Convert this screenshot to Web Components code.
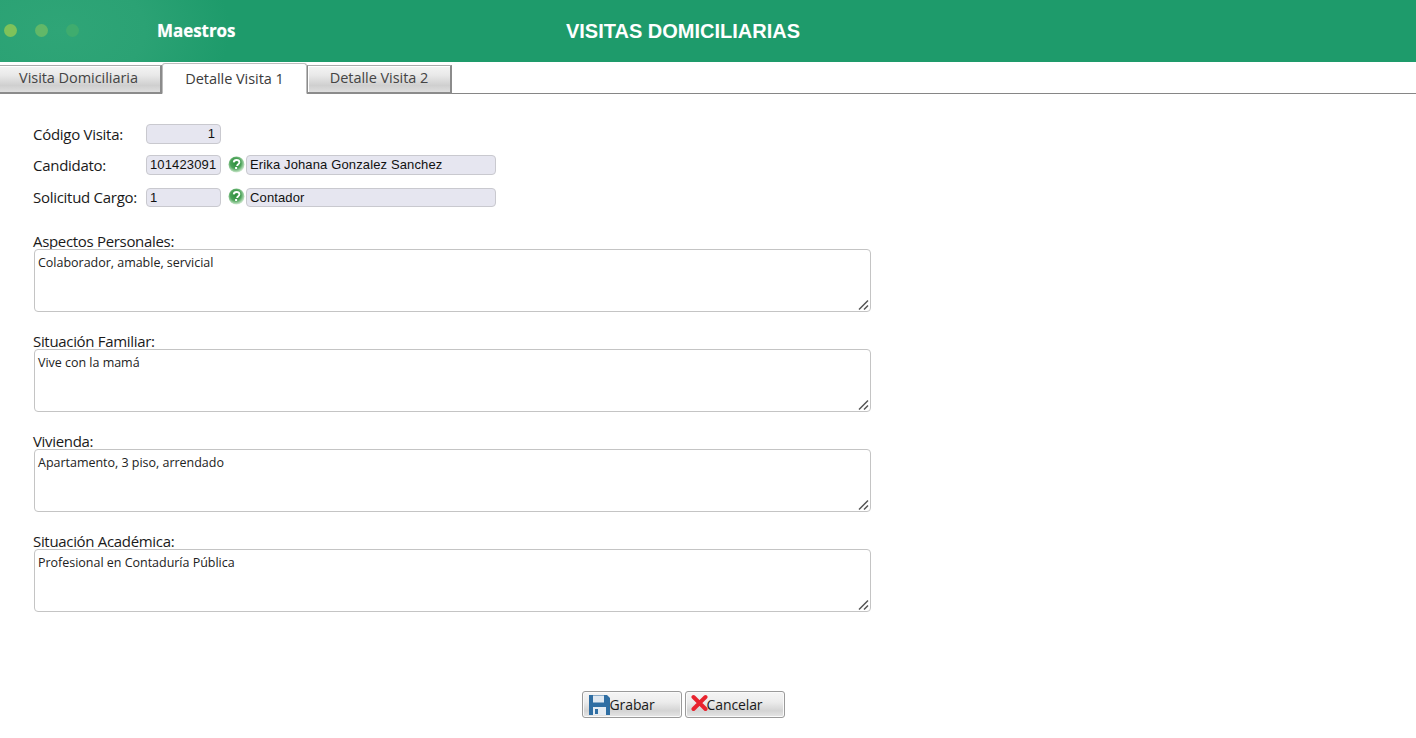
<!DOCTYPE html>
<html lang="es"><head><meta charset="utf-8"><title>Visitas Domiciliarias</title>
<style>
html,body{margin:0;padding:0;background:#fff;height:100%;overflow:hidden}
body{font-family:"Open Sans","Noto Sans",sans-serif;color:#1a1a1a}
</style></head><body>
<template id="t-header"><style>
:host{display:grid;grid-template-columns:1fr auto 1fr;align-items:center;height:62px;padding-bottom:2px;box-sizing:border-box;color:#fff;
background:radial-gradient(ellipse 170px 110px at 60px 30px,#2fa577 0%,#2ba274 50%,rgba(31,155,106,0) 100%),#1e9b6b}
.l{display:flex;align-items:center;position:relative;height:100%}
.dots{display:flex;gap:18px;margin-left:4px;width:153px}
.dots i{width:13px;height:13px;border-radius:50%;display:block;filter:blur(.6px)}
.m{font:700 17px "Open Sans",sans-serif;letter-spacing:-.05px;text-shadow:0 0 1px rgba(255,255,255,.5)}
.t{font:700 20px "Liberation Sans",sans-serif;transform:translateX(-25px);margin-top:2px}
</style><div class="l"><div class="dots"><i style="background:#7fc25a"></i><i style="background:#62b868"></i><i style="background:#3fac6e"></i></div><span class="m"><slot name="menu"></slot></span></div><div class="t"><slot name="title"></slot></div><div></div></template>

<template id="t-tabs"><style>
:host{display:flex;align-items:flex-end;height:32px;box-sizing:border-box;border-bottom:1px solid #868686;padding-left:0}
</style><slot></slot></template>

<template id="t-tab"><style>
:host{display:block;box-sizing:border-box;height:29px;margin-bottom:-1px;border:1px solid #8b8b8b;border-width:1px 2px 2px 1px;border-top-color:#aaa;
font:14.5px/24px "Open Sans",sans-serif;letter-spacing:-.05px;color:#444;text-align:center;
background:linear-gradient(#f4f4f4 0%,#e9e9e9 35%,#cfcfcf 75%,#dedede 100%);box-shadow:inset 1px 1px 0 #fff}
:host([active]){height:31px;background:#fff;border:1px solid #bdbdbd;border-bottom-color:#fff;border-radius:3px 3px 0 0;box-shadow:none;line-height:29px;color:#3b3b3b}
</style><slot></slot></template>

<template id="t-field"><style>
:host{display:block;box-sizing:border-box;height:20px;background:#e6e6f0;border:1px solid #c9c9cf;border-radius:4px;
font:13px/18px "Liberation Sans",sans-serif;color:#111;padding:0 3px;white-space:nowrap;overflow:hidden;letter-spacing:.13px}
:host([right]){text-align:right;padding-right:5px}
</style><slot></slot></template>

<template id="t-help"><style>
:host{display:block;width:17px;height:17px;margin:-2px 0 0 -1px}
svg{display:block}
</style><svg width="17" height="17" viewBox="0 0 17 17"><defs><radialGradient id="g" cx=".45" cy=".42" r=".6"><stop offset="0" stop-color="#2f8f3e"/><stop offset=".55" stop-color="#4aa257"/><stop offset=".85" stop-color="#a9d6ad"/><stop offset="1" stop-color="#dceedd"/></radialGradient></defs><circle cx="8.500" cy="8.500" r="8" fill="url(#g)"/><path d="M5.700 6.400C5.900 4.700 7 4 8.500 4c1.700 0 2.900.9 2.900 2.300 0 1.100-.7 1.700-1.400 2.200-.7.500-.9.8-.9 1.600" fill="none" stroke="#fff" stroke-width="1.800"/><rect x="7.100" y="11" width="2" height="2" fill="#fff"/></svg></template>

<template id="t-row"><style>
:host{display:grid;grid-template-columns:113px 75px 8px 17px 250px;align-items:center;height:20px;font:15px/20px "Open Sans",sans-serif;color:#1a1a1a;letter-spacing:-.28px}
</style><slot></slot></template>

<template id="t-area"><style>
:host{display:block;width:838px;margin-left:1px}
.lb{font:15px/16px "Open Sans",sans-serif;letter-spacing:-.32px;margin-left:-1px;height:16px;padding-top:1px;color:#1a1a1a}
.box{position:relative;box-sizing:border-box;width:837px;height:63px;border:1px solid #c4c4c4;border-radius:4px;padding:5px 3px;font:12.5px/16px "Open Sans",sans-serif;letter-spacing:-.02px;color:#222;background:#fff}
svg{position:absolute;right:1px;bottom:1px;display:block}
</style><div class="lb"><slot name="label"></slot></div><div class="box"><slot></slot><svg width="11" height="11" viewBox="0 0 11 11"><path d="M1 10.500 10 1.500M6 10.500 10 6.500" stroke="#555" stroke-width="1.500" fill="none"/></svg></div></template>

<template id="t-btn"><style>
:host{display:inline-flex;align-items:center;box-sizing:border-box;width:100px;height:27px;padding-left:6px;border:1px solid #9a9a9a;border-radius:3px;font:14px/25px "Open Sans",sans-serif;letter-spacing:-.1px;color:#1a1a1a;
background:linear-gradient(#f5f5f5 0%,#ececec 40%,#d4d4d4 75%,#e6e6e6 100%);box-shadow:inset 0 0 0 1px #fafafa}
::slotted(svg){flex:none}
</style><slot></slot></template>

<template id="t-form"><style>
:host{display:block;padding:30px 0 0 33px}
.top{margin-bottom:26px}
</style><div class="top"><slot name="rows"></slot></div><div><slot name="areas"></slot></div></template>

<template id="t-col"><style>:host{display:flex;flex-direction:column;gap:var(--g,11px)}</style><slot></slot></template>

<template id="t-actions"><style>
:host{display:flex;justify-content:center;gap:3px;margin-top:79px;transform:translateX(-25px)}
</style><slot></slot></template>

<x-header><span slot="menu">Maestros</span><span slot="title">VISITAS DOMICILIARIAS</span></x-header>
<x-tabs>
<x-tab style="width:166px;margin-left:-4px">Visita Domiciliaria</x-tab>
<x-tab active style="width:145px">Detalle Visita 1</x-tab>
<x-tab style="width:145px">Detalle Visita 2</x-tab>
</x-tabs>
<x-form>
<x-col slot="rows" style="--g:11px">
<x-row><span>Código Visita:</span><x-field right>1</x-field></x-row>
<x-row><span>Candidato:</span><x-field>101423091</x-field><span></span><x-help></x-help><x-field>Erika Johana Gonzalez Sanchez</x-field></x-row>
<x-row style="height:19px;margin-top:1px;--h:19px"><span>Solicitud Cargo:</span><x-field style="height:19px;line-height:17px">1</x-field><span></span><x-help></x-help><x-field style="height:19px;line-height:17px">Contador</x-field></x-row>
</x-col>
<x-col slot="areas" style="--g:20px">
<x-area><span slot="label">Aspectos Personales:</span>Colaborador, amable, servicial</x-area>
<x-area><span slot="label">Situación Familiar:</span>Vive con la mamá</x-area>
<x-area><span slot="label">Vivienda:</span>Apartamento, 3 piso, arrendado</x-area>
<x-area><span slot="label">Situación Académica:</span>Profesional en Contaduría Pública</x-area>
</x-col>
</x-form>
<x-actions>
<x-btn><svg width="21" height="20" viewBox="0 0 21 20"><path d="M0 0h18l3 3v17H0z" fill="#2f6ea3"/><rect x="4" y=".5" width="11" height="7" fill="#dfe8f1"/><rect x="4" y="12" width="13" height="8" fill="#e4ebf2"/><rect x="6" y="14" width="3" height="5" fill="#2f6ea3"/></svg>Grabar</x-btn>
<x-btn style="padding-left:5px"><svg width="17" height="18" viewBox="0 0 17 18" style="margin-top:-4px"><path d="M2.500 3 14.500 15M14.500 3 2.500 15" stroke="#e8232e" stroke-width="4" stroke-linecap="round"/></svg><span style="margin-left:-1px">Cancelar</span></x-btn>
</x-actions>
<script>
for(const [tag,id] of [['x-header','t-header'],['x-tabs','t-tabs'],['x-tab','t-tab'],['x-field','t-field'],['x-help','t-help'],['x-row','t-row'],['x-area','t-area'],['x-btn','t-btn'],['x-form','t-form'],['x-col','t-col'],['x-actions','t-actions']]){
customElements.define(tag,class extends HTMLElement{constructor(){super();this.attachShadow({mode:'open'}).appendChild(document.getElementById(id).content.cloneNode(true))}});
}
</script>
</body></html>
